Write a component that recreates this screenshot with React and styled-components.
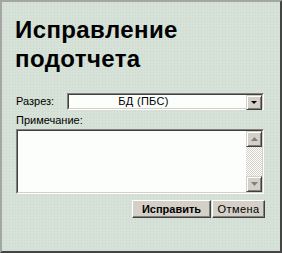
import React from "react";
import styled, { createGlobalStyle } from "styled-components";

const Global = createGlobalStyle`
  html, body { margin: 0; padding: 0; background: #d5e0d5; }
  * { box-sizing: border-box; }
`;

const Panel = styled.div`
  width: 282px;
  height: 253px;
  border-style: solid;
  border-width: 2px;
  border-color: #a3a6a3 #454545 #454545 #a3a6a3;
  background-color: #d6e1d7;
  background-image: radial-gradient(#cad7cb 0.6px, transparent 0.8px);
  background-size: 3px 3px;
  padding: 13px 16px 0 14px;
  display: flex;
  flex-direction: column;
  font-family: "Liberation Sans", Arial, sans-serif;
  font-size: 11px;
  color: #000;
`;

const Title = styled.h1`
  margin: 0 0 0 -1px;
  font-family: "Liberation Sans", Arial, sans-serif;
  font-weight: bold;
  font-size: 24px;
  letter-spacing: 0.4px;
  line-height: 29px;
  color: #000;
`;

const Row = styled.div`
  display: flex;
  align-items: center;
  margin-top: 20px;
`;

const Label = styled.span`
  width: 51px;
  flex: none;
  line-height: 13px;
`;

const Inset = styled.div`
  border-style: solid;
  border-width: 1px;
  border-color: #808080 #ffffff #ffffff #808080;
`;

const InsetInner = styled.div`
  border-style: solid;
  border-width: 1px;
  border-color: #404040 #d4d0c8 #d4d0c8 #404040;
  background: #fbfefb;
  display: flex;
`;

const SelectBox = styled(Inset)`
  flex: 1;
  height: 17px;
  & > div { height: 100%; }
`;

const SelectValue = styled.div`
  flex: 1;
  text-align: center;
  line-height: 13px;
  padding-right: 28px;
  letter-spacing: 0.3px;
`;

const Raised = styled.div`
  width: 16px;
  flex: none;
  background: #d4d0c8;
  border-style: solid;
  border-width: 1px;
  border-color: #d4d0c8 #404040 #404040 #d4d0c8;
  box-shadow: inset 1px 1px 0 #ffffff, inset -1px -1px 0 #808080;
  display: flex;
  align-items: center;
  justify-content: center;
  height: ${(p) => p.$h || 16}px;
`;

const NoteLabel = styled.div`
  margin-top: 4px;
  line-height: 13px;
`;

const NoteBox = styled(Inset)`
  margin-top: 2px;
  height: 65px;
  & > div { height: 100%; }
`;

const TextArea = styled.div`
  flex: 1;
`;

const ScrollBar = styled.div`
  width: 16px;
  display: flex;
  flex-direction: column;
  background: repeating-conic-gradient(#d4d0c8 0 25%, #ffffff 0 50%) 0 0 / 2px 2px;
`;

const Track = styled.div`
  flex: 1;
`;

const Buttons = styled.div`
  display: flex;
  justify-content: flex-end;
  gap: 1px;
  margin-top: 6px;
  margin-right: -1px;
`;

const Button = styled.button`
  height: 18px;
  padding: 0;
  width: ${(p) => p.$w}px;
  font-family: "Liberation Sans", Arial, sans-serif;
  font-size: 11px;
  letter-spacing: ${(p) => (p.$primary ? "0" : "0.4px")};
  font-weight: ${(p) => (p.$primary ? "bold" : "normal")};
  color: #000;
  background: #d4d0c8;
  border-style: solid;
  border-width: 1px;
  border-color: #ffffff #404040 #404040 #ffffff;
  box-shadow: inset -1px -1px 0 #808080;
  line-height: 14px;
`;

const Arrow = ({ dir = "down", color = "#000", w = 7, h = 4 }) => (
  <svg width={w} height={h} viewBox={`0 0 ${w} ${h}`} style={{ display: "block" }}>
    {dir === "down" ? (
      <polygon points={`0,0 ${w},0 ${w / 2},${h}`} fill={color} />
    ) : (
      <polygon points={`0,${h} ${w},${h} ${w / 2},0`} fill={color} />
    )}
  </svg>
);

export default function App() {
  return (
    <>
      <Global />
      <Panel>
        <Title>
          Исправление
          <br />
          подотчета
        </Title>
        <Row>
          <Label>Разрез:</Label>
          <SelectBox>
            <InsetInner>
              <SelectValue>БД (ПБС)</SelectValue>
              <Raised $h={15}>
                <Arrow dir="down" w={6} h={3} />
              </Raised>
            </InsetInner>
          </SelectBox>
        </Row>
        <NoteLabel>Примечание:</NoteLabel>
        <NoteBox>
          <InsetInner>
            <TextArea />
            <ScrollBar>
              <Raised>
                <Arrow dir="up" color="#808080" />
              </Raised>
              <Track />
              <Raised>
                <Arrow dir="down" color="#808080" />
              </Raised>
            </ScrollBar>
          </InsetInner>
        </NoteBox>
        <Buttons>
          <Button $primary $w={79}>Исправить</Button>
          <Button $w={53}>Отмена</Button>
        </Buttons>
      </Panel>
    </>
  );
}
